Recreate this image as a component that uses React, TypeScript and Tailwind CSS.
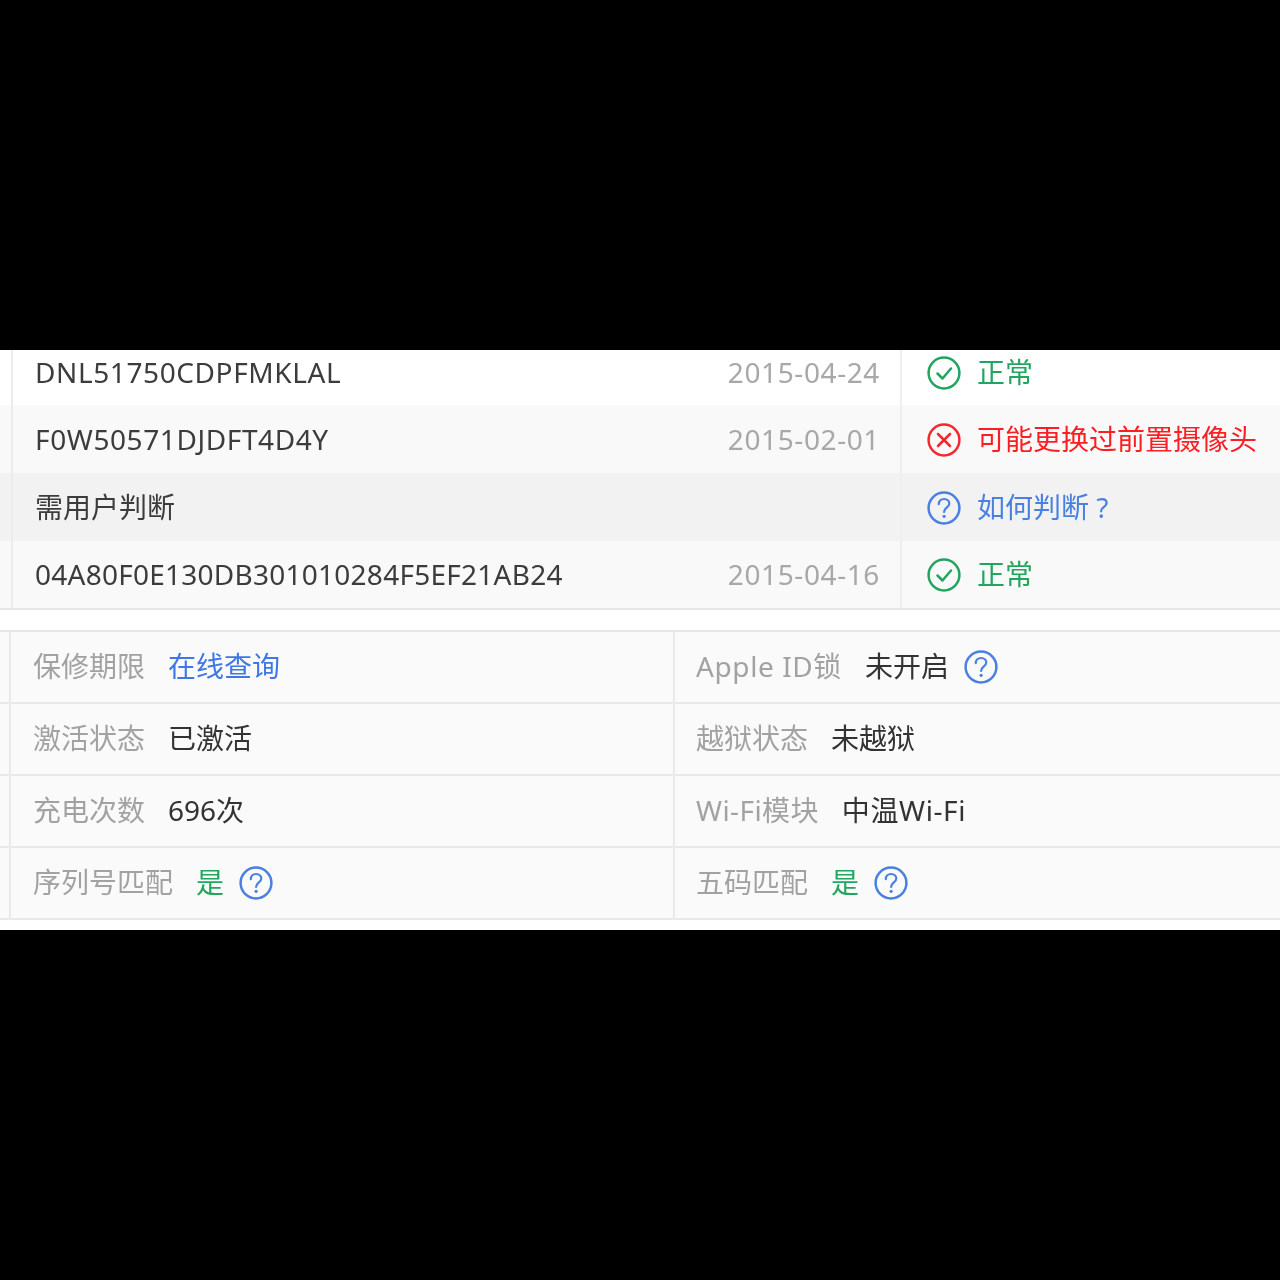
const font = { fontFamily: '"Noto Sans", "Noto Sans CJK SC", sans-serif' };

function CheckIcon() {
  return (
    <svg width="34" height="34" viewBox="0 0 34 34" fill="none" stroke="#22a55e" strokeWidth="2.5" className="shrink-0 translate-y-px">
      <circle cx="17" cy="17" r="15.4" />
      <path d="M10.5 17.5l5 5 8.5-10" strokeLinecap="round" strokeLinejoin="round" />
    </svg>
  );
}

function CrossIcon() {
  return (
    <svg width="34" height="34" viewBox="0 0 34 34" fill="none" stroke="#f5282d" strokeWidth="2.5" className="shrink-0 translate-y-px">
      <circle cx="17" cy="17" r="15.4" />
      <path d="M11 11l12 12M23 11L11 23" strokeLinecap="round" />
    </svg>
  );
}

function HelpIcon() {
  return (
    <svg width="34" height="34" viewBox="0 0 34 34" fill="none" stroke="#4a80e0" strokeWidth="2.5" className="shrink-0 translate-y-px">
      <circle cx="17" cy="17" r="15.4" />
      <path d="M11.8 13.2c0-3.2 2.4-5.2 5.3-5.2s5.2 1.9 5.2 4.6c0 3.8-5.2 4-5.2 8.4" strokeWidth="2.2" strokeLinecap="round" />
      <circle cx="17.1" cy="25.3" r="1.6" fill="#4a80e0" stroke="none" />
    </svg>
  );
}

type RowProps = {
  name: string;
  nameClass?: string;
  date?: string;
  status: string;
  kind: 'ok' | 'bad' | 'help';
  bg: string;
  pad?: string;
};

function CheckRow({ name, nameClass, date, status, kind, bg, pad }: RowProps) {
  const color = kind === 'ok' ? 'text-[#22a55e]' : kind === 'bad' ? 'text-[#fb1f24]' : 'text-[#4a80e0]';
  return (
    <div className={`flex ${bg}`}>
      <div className="w-[13px] shrink-0 border-r-2 border-[#ececec]" />
      <div className={`flex-1 flex items-center justify-between pl-[22px] pr-[20px] border-r-2 border-[#efefef] text-[#3c3c3c] ${pad}`}>
        <span className={nameClass}>{name}</span>
        {date && <span className="text-[#a8a8a8] tracking-[0.6px]">{date}</span>}
      </div>
      <div className={`w-[378px] shrink-0 flex items-center pl-[25px] gap-4 ${color} ${pad}`}>
        {kind === 'ok' && <CheckIcon />}
        {kind === 'bad' && <CrossIcon />}
        {kind === 'help' && <HelpIcon />}
        <span>{status}</span>
      </div>
    </div>
  );
}

function Field({ label, labelClass, pl, children }: { label: string; labelClass?: string; pl: string; children: React.ReactNode }) {
  return (
    <div className={`flex items-center gap-[23px] h-full pb-[2px] ${pl}`}>
      <span className={`text-[#a2a2a2] ${labelClass}`}>{label}</span>
      <div className="flex items-center gap-[15px] text-[#333]">{children}</div>
    </div>
  );
}

const Yes = () => <span className="text-[#22a55e]">是</span>;

function InfoRow({ left, right }: { left: React.ReactNode; right: React.ReactNode }) {
  return (
    <div className="flex h-[72px] border-b-2 border-[#e9e9e9]">
      <div className="w-[11px] shrink-0 border-r-2 border-[#e9e9e9]" />
      <div className="w-[664px] shrink-0 border-r-2 border-[#e9e9e9]">{left}</div>
      <div className="flex-1">{right}</div>
    </div>
  );
}

export default function App() {
  return (
    <div className="w-[1280px] h-[1280px] bg-black overflow-hidden pt-[350px]">
      <div style={font} className="h-[580px] bg-white text-[28px] leading-none blur-[0.7px]">
        <div className="border-b-2 border-[#e6e6e6]">
          <CheckRow name="DNL51750CDPFMKLAL" nameClass="tracking-[0.6px]" date="2015-04-24" status="正常" kind="ok" bg="bg-white h-[55px]" pad="pb-[11px]" />
          <CheckRow name="F0W50571DJDFT4D4Y" nameClass="tracking-[0.6px]" date="2015-02-01" status="可能更换过前置摄像头" kind="bad" bg="bg-[#f9f9f9] h-[68px]" />
          <CheckRow name="需用户判断" status="如何判断 ?" kind="help" bg="bg-[#f2f2f2] h-[68px]" />
          <CheckRow name="04A80F0E130DB301010284F5EF21AB24" nameClass="tracking-[0.25px]" date="2015-04-16" status="正常" kind="ok" bg="bg-[#f9f9f9] h-[67px]" pad="pb-[2px]" />
        </div>
        <div className="mt-5 border-t-2 border-[#e6e6e6] bg-[#fafafa]">
          <InfoRow
            left={<Field pl="pl-[22px]" label="保修期限"><span className="text-[#3f78e6]">在线查询</span></Field>}
            right={<Field pl="pl-[21px]" label="Apple ID锁" labelClass="tracking-[0.6px]"><span>未开启</span><HelpIcon /></Field>}
          />
          <InfoRow
            left={<Field pl="pl-[22px]" label="激活状态"><span>已激活</span></Field>}
            right={<Field pl="pl-[21px]" label="越狱状态"><span>未越狱</span></Field>}
          />
          <InfoRow
            left={<Field pl="pl-[22px]" label="充电次数"><span>696次</span></Field>}
            right={<Field pl="pl-[21px]" label="Wi-Fi模块" labelClass="tracking-[0.4px]"><span className="tracking-[0.6px]">中温Wi-Fi</span></Field>}
          />
          <InfoRow
            left={<Field pl="pl-[22px]" label="序列号匹配"><Yes /><HelpIcon /></Field>}
            right={<Field pl="pl-[21px]" label="五码匹配"><Yes /><HelpIcon /></Field>}
          />
        </div>
      </div>
    </div>
  );
}
